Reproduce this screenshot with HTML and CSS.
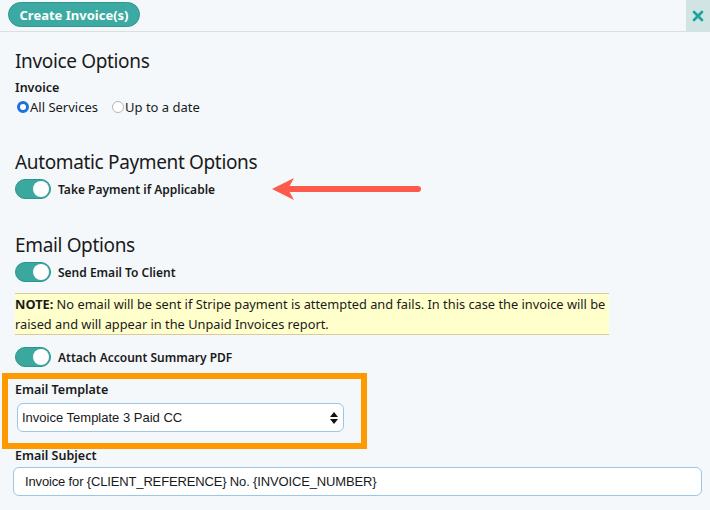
FILE: index.html
```html
<!DOCTYPE html>
<html lang="en">
<head>
    <meta charset="UTF-8">
    <meta name="viewport" content="width=device-width, initial-scale=1.0">
    <title>Create Invoices</title>
    <link rel="stylesheet" href="styles.css">
</head>
<body>
    <div class="topbar">
        <button class="create-btn">Create Invoice(s)</button>
        <div class="close-box">
            <svg width="12" height="12" viewBox="0 0 12 12"><path d="M2 2 L10 10 M10 2 L2 10" stroke="#1ba39c" stroke-width="2.6" stroke-linecap="round"/></svg>
        </div>
    </div>
    <div class="main">
        <h2>Invoice Options</h2>
        <div class="field-label">Invoice</div>
        <div class="radio-row">
            <label class="radio"><span class="dot checked"></span>All Services</label>
            <label class="radio"><span class="dot"></span>Up to a date</label>
        </div>

        <h2 class="section">Automatic Payment Options</h2>
        <div class="toggle-row">
            <span class="toggle"><span class="knob"></span></span>
            Take Payment if Applicable
        </div>

        <h2 class="section">Email Options</h2>
        <div class="toggle-row">
            <span class="toggle"><span class="knob"></span></span>
            Send Email To Client
        </div>
        <div class="note"><b>NOTE:</b> No email will be sent if Stripe payment is attempted and fails. In this case the invoice will be raised and will appear in the Unpaid Invoices report.</div>
        <div class="toggle-row attach">
            <span class="toggle"><span class="knob"></span></span>
            Attach Account Summary PDF
        </div>

        <div class="highlight">
            <div class="field-label">Email Template</div>
            <div class="select-wrap">
                <div class="select">Invoice Template 3 Paid CC</div>
                <svg class="chevrons" width="8" height="12" viewBox="0 0 8 12"><path d="M4 0 L8 5 H0 Z M0 7 H8 L4 12 Z" fill="#111"/></svg>
            </div>
        </div>

        <div class="field-label subject-label">Email Subject</div>
        <div class="text-input">Invoice for {CLIENT_REFERENCE} No. {INVOICE_NUMBER}</div>

        <svg class="annot-arrow" width="156" height="24" viewBox="0 0 156 24">
            <path d="M18 12 H146" stroke="#fd5a4c" stroke-width="6" stroke-linecap="round"/>
            <path d="M0 12 L22 1 L16 12 L22 23 Z" fill="#fd5a4c"/>
        </svg>
    </div>
</body>
</html>
```
FILE: styles.css
```css
body {
    margin: 0;
    background-color: #f4f8fb;
    font-family: 'Noto Sans', 'Open Sans', sans-serif;
    color: #1a1a1a;
}
.topbar {
    height: 31px;
    border-bottom: 1px solid #dcdfe2;
    display: flex;
    align-items: flex-start;
    justify-content: space-between;
}
.create-btn {
    margin: 2px 0 0 8px;
    height: 25px;
    width: 132px;
    border-radius: 13px;
    border: 1px solid #2f9790;
    background-color: #3caaa2;
    color: white;
    font-family: 'Noto Sans', sans-serif;
    font-size: 13px;
    font-weight: bold;
    padding: 0;
}
.close-box {
    width: 24px;
    height: 31px;
    background-color: #d0e4e3;
    display: flex;
    align-items: center;
    justify-content: center;
}
.main {
    position: relative;
    padding: 17px 8px 0 15px;
}
h2 {
    margin: 0;
    font-size: 19px;
    font-weight: normal;
    line-height: 24px;
    letter-spacing: -0.35px;
}
h2.section {
    margin-top: 34px;
}
.field-label {
    margin-top: 6px;
    font-size: 12.5px;
    font-weight: 600;
    line-height: 18px;
}
.radio-row {
    margin-top: 1px;
    display: flex;
    gap: 14px;
    font-size: 13px;
    line-height: 18px;
    padding-left: 2px;
}
.radio {
    display: flex;
    align-items: center;
    gap: 1px;
}
.dot {
    width: 10px;
    height: 10px;
    border-radius: 50%;
    border: 1px solid #b5b5b5;
    background: white;
    display: inline-block;
}
.dot.checked {
    width: 6px;
    height: 6px;
    border: 3px solid #1e6fe0;
    background: white;
}
.toggle-row {
    margin-top: 5px;
    display: flex;
    align-items: center;
    gap: 7px;
    font-size: 12px;
    font-weight: 600;
    height: 20px;
}
.toggle {
    width: 36px;
    height: 20px;
    box-sizing: border-box;
    border-radius: 10px;
    background-color: #3ba89f;
    border: 1px solid #2f948d;
    display: flex;
    align-items: center;
    justify-content: flex-end;
    padding-right: 1px;
}
.knob {
    width: 16px;
    height: 16px;
    border-radius: 50%;
    background: white;
}
.note {
    margin-top: 11px;
    width: 594px;
    background-color: #ffffcc;
    border-top: 1px solid #d8c9a3;
    border-bottom: 1px solid #d8c9a3;
    font-size: 12.8px;
    line-height: 20px;
}
.toggle-row.attach {
    margin-top: 12px;
}
.highlight {
    margin: 6px 0 0 -13px;
    width: 346px;
    border: 6px solid #ff9900;
    padding: 2px 0 11px 7px;
}
.highlight .field-label {
    margin-top: 0;
}
.select-wrap {
    position: relative;
    margin: 4px 0 0 2px;
    width: 327px;
}
.select {
    height: 29px;
    box-sizing: border-box;
    border: 1px solid #9cc6e6;
    border-radius: 6px;
    background: white;
    font-family: 'Liberation Sans', Arial, sans-serif;
    font-size: 13px;
    line-height: 27px;
    padding-left: 4px;
}
.chevrons {
    position: absolute;
    right: 6px;
    top: 9px;
}
.subject-label {
    margin-top: 0;
    line-height: 14px;
}
.text-input {
    margin: 4px 0 0 -2px;
    height: 29px;
    box-sizing: border-box;
    border: 1px solid #9cc6e6;
    border-radius: 6px;
    background: white;
    font-family: 'Liberation Sans', Arial, sans-serif;
    font-size: 13px;
    letter-spacing: -0.15px;
    line-height: 27px;
    padding-left: 11px;
}
.annot-arrow {
    position: absolute;
    left: 272px;
    top: 145px;
}
```
